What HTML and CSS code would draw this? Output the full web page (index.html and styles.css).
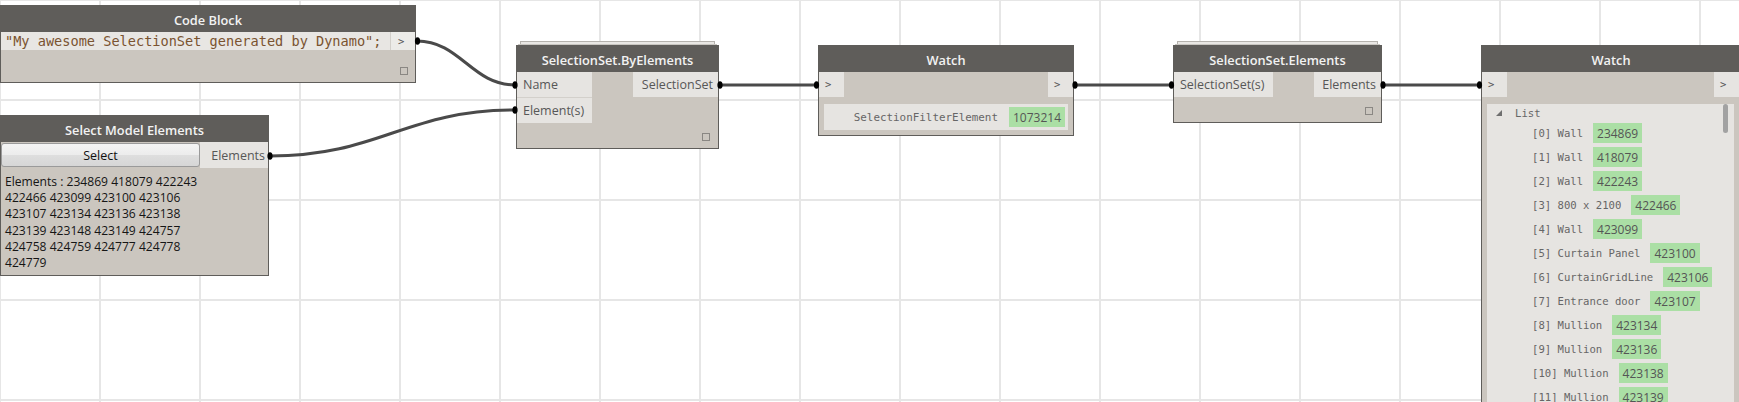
FILE: index.html
```html
<!DOCTYPE html>
<html>
<head>
<meta charset="utf-8">
<link rel="stylesheet" href="styles.css">
</head>
<body>
<div class="canvas">

  <div class="node n-code">
    <div class="head">Code Block</div>
    <div class="code-row">
      <div class="code">"My awesome SelectionSet generated by Dynamo";</div>
      <div class="arrow-port">&gt;</div>
    </div>
    <div class="foot"><span class="check"></span></div>
  </div>

  <div class="node n-select">
    <div class="head">Select Model Elements</div>
    <div class="sel-row">
      <div class="btn">Select</div>
      <div class="oport">Elements</div>
    </div>
    <div class="sel-text">Elements : 234869 418079 422243<br>422466 423099 423100 423106<br>423107 423134 423136 423138<br>423139 423148 423149 424757<br>424758 424759 424777 424778<br>424779</div>
  </div>

  <div class="node n-byel stack">
    <div class="head">SelectionSet.ByElements</div>
    <div class="ports">
      <div class="ins w-byel">
        <div class="iport">Name</div>
        <div class="iport second">Element(s)</div>
      </div>
      <div class="outs w-byel-out">
        <div class="oport">SelectionSet</div>
      </div>
    </div>
    <div class="foot f8"><span class="check"></span></div>
  </div>

  <div class="node n-watch1">
    <div class="head">Watch</div>
    <div class="ports">
      <div class="arrow-box">&gt;</div>
      <div class="arrow-box">&gt;</div>
    </div>
    <div class="watch-val">
      <span class="mono">SelectionFilterElement</span>
      <span class="green">1073214</span>
    </div>
  </div>

  <div class="node n-sselem stack">
    <div class="head">SelectionSet.Elements</div>
    <div class="ports">
      <div class="ins w-ss">
        <div class="iport">SelectionSet(s)</div>
      </div>
      <div class="outs w-ss-out">
        <div class="oport">Elements</div>
      </div>
    </div>
    <div class="foot f8"><span class="check"></span></div>
  </div>

  <div class="node n-watch2">
    <div class="head">Watch</div>
    <div class="ports">
      <div class="arrow-box">&gt;</div>
      <div class="arrow-box wide">&gt;</div>
    </div>
    <div class="list">
      <div class="list-head">
        <svg class="tri" width="6" height="6" viewBox="0 0 6 6"><polygon points="6,0 6,6 0,6" fill="#6f6f6f"/></svg>
        <span class="mono">List</span>
      </div>
      <div class="item"><span class="mono">[0] Wall</span><span class="green">234869</span></div>
      <div class="item"><span class="mono">[1] Wall</span><span class="green">418079</span></div>
      <div class="item"><span class="mono">[2] Wall</span><span class="green">422243</span></div>
      <div class="item"><span class="mono">[3] 800 x 2100</span><span class="green">422466</span></div>
      <div class="item"><span class="mono">[4] Wall</span><span class="green">423099</span></div>
      <div class="item"><span class="mono">[5] Curtain Panel</span><span class="green">423100</span></div>
      <div class="item"><span class="mono">[6] CurtainGridLine</span><span class="green">423106</span></div>
      <div class="item"><span class="mono">[7] Entrance door</span><span class="green">423107</span></div>
      <div class="item"><span class="mono">[8] Mullion</span><span class="green">423134</span></div>
      <div class="item"><span class="mono">[9] Mullion</span><span class="green">423136</span></div>
      <div class="item"><span class="mono">[10] Mullion</span><span class="green">423138</span></div>
      <div class="item"><span class="mono">[11] Mullion</span><span class="green">423139</span></div>
      <div class="scroll"></div>
    </div>
  </div>

  <svg class="wires" width="1739" height="402" viewBox="0 0 1739 402">
    <g fill="none" stroke="#4a4a4a" stroke-width="3">
      <path d="M417 41 C 460 41, 472 85, 515 85"/>
      <path d="M270 156 C 380 156, 405 110, 515 110"/>
      <path d="M720 85 L 816 85"/>
      <path d="M1075 85 L 1171 85"/>
      <path d="M1383 85 L 1479 85"/>
    </g>
    <g fill="#000">
      <ellipse cx="417.5" cy="41" rx="2.6" ry="3.8"/>
      <ellipse cx="270" cy="156" rx="2.6" ry="3.8"/>
      <ellipse cx="515" cy="85" rx="2.6" ry="3.8"/>
      <ellipse cx="515" cy="110" rx="2.6" ry="3.8"/>
      <ellipse cx="720" cy="85" rx="2.6" ry="3.8"/>
      <ellipse cx="816.5" cy="85" rx="2.6" ry="3.8"/>
      <ellipse cx="1075" cy="85" rx="2.6" ry="3.8"/>
      <ellipse cx="1171.5" cy="85" rx="2.6" ry="3.8"/>
      <ellipse cx="1383" cy="85" rx="2.6" ry="3.8"/>
      <ellipse cx="1479.5" cy="85" rx="2.6" ry="3.8"/>
    </g>
  </svg>
</div>
</body>
</html>
```

FILE: styles.css
```css
html, body {
  margin: 0;
  padding: 0;
}
body {
  width: 1739px;
  height: 402px;
  overflow: hidden;
  background-color: #ffffff;
  background-image:
    linear-gradient(to right, #e6e6e6 2px, transparent 2px),
    linear-gradient(to bottom, #e6e6e6 2px, transparent 2px);
  background-size: 100px 100px;
  background-position: -1px -1px;
  font-family: "Open Sans", "Noto Sans", sans-serif;
}
.canvas {
  position: relative;
  width: 1739px;
  height: 402px;
  overflow: hidden;
}

/* generic node */
.node {
  position: absolute;
  box-sizing: border-box;
  border: 1px solid #5f5d5a;
  background: #cbc6bf;
  display: flex;
  flex-direction: column;
}
.head {
  flex: none;
  height: 26px;
  background: #5f5d5a;
  color: #f2f2f2;
  font-weight: 600;
  font-size: 12.8px;
  display: flex;
  align-items: center;
  justify-content: center;
  padding-top: 1px;
  box-sizing: border-box;
}
.stack::before {
  content: "";
  position: absolute;
  left: 3px;
  right: 3px;
  top: -5px;
  height: 3px;
  border: 1px solid #b5b2ad;
  border-bottom: none;
  background: #e9e7e4;
}
.stack::after {
  content: "";
  position: absolute;
  left: 1px;
  right: 1px;
  top: -2px;
  height: 1px;
  background: #c9c6c1;
}
.foot {
  flex: 1;
  display: flex;
  justify-content: flex-end;
  align-items: flex-end;
  padding: 0 7px 7px 0;
}
.foot.f8 {
  padding-right: 8px;
}
.check {
  display: block;
  box-sizing: border-box;
  width: 8px;
  height: 8px;
  border: 1px solid #8a8783;
}

/* node placement on the free canvas */
.n-code   { left: 0;      top: 5px;  width: 416px; height: 78px; }
.n-select { left: 0;      top: 115px; width: 269px; height: 161px; }
.n-byel   { left: 516px;  top: 45px; width: 203px; height: 104px; }
.n-watch1 { left: 818px;  top: 45px; width: 256px; height: 91px; }
.n-sselem { left: 1173px; top: 45px; width: 209px; height: 78px; }
.n-watch2 { left: 1481px; top: 45px; width: 260px; height: 400px; }

/* code block */
.code-row {
  display: flex;
  height: 18px;
  flex: none;
}
.code {
  flex: 1;
  background: #e8e6e3;
  font-family: "DejaVu Sans Mono", monospace;
  font-size: 13.6px;
  line-height: 18px;
  color: #7a5330;
  padding-left: 4px;
  white-space: nowrap;
}
.arrow-port {
  width: 25px;
  background: #ecebe8;
  border-left: 1px solid #d2cfca;
  font-family: "DejaVu Sans Mono", monospace;
  font-size: 10.5px;
  line-height: 18px;
  color: #555;
  padding-left: 7px;
  box-sizing: border-box;
}

/* ports */
.ports {
  display: flex;
  justify-content: space-between;
  flex: none;
}
.ins, .outs {
  display: flex;
  flex-direction: column;
}
.w-byel { width: 75px; }
.w-byel-out { width: 85px; }
.w-ss { width: 99px; }
.w-ss-out { width: 67px; }
.iport, .oport {
  height: 25px;
  background: #e6e4e1;
  color: #575757;
  font-size: 12.5px;
  display: flex;
  align-items: center;
  box-sizing: border-box;
}
.iport {
  padding-left: 6px;
}
.iport.second {
  height: 26px;
  border-top: 1px solid #d3d0cb;
}
.oport {
  justify-content: flex-end;
  padding-right: 5px;
}

/* select model elements */
.sel-row {
  display: flex;
  height: 26px;
  flex: none;
}
.btn {
  box-sizing: border-box;
  width: 199px;
  height: 24px;
  margin-top: 1px;
  border: 1px solid #9a9a9a;
  border-radius: 3px;
  background: linear-gradient(to bottom, #f4f4f4 0%, #ececec 50%, #dedede 51%, #d6d6d6 100%);
  font-size: 12.5px;
  color: #111;
  display: flex;
  align-items: center;
  justify-content: center;
}
.sel-row .oport {
  flex: 1;
  height: 26px;
  padding-right: 3px;
}
.sel-text {
  padding: 6px 4px 0 4px;
  font-size: 12.1px;
  line-height: 16.2px;
  color: #151515;
}

/* watch nodes */
.arrow-box {
  width: 25px;
  height: 25px;
  background: #e6e4e1;
  font-family: "DejaVu Sans Mono", monospace;
  font-size: 10.5px;
  line-height: 25px;
  color: #555;
  padding-left: 6px;
  box-sizing: border-box;
}
.arrow-box.wide {
  width: 26px;
}
.watch-val {
  margin: 7px 5px 0 5px;
  height: 26px;
  background: #e6e4e1;
  display: flex;
  justify-content: flex-end;
  align-items: center;
  gap: 11px;
  padding-right: 3px;
}
.mono {
  font-family: "DejaVu Sans Mono", monospace;
  font-size: 10.6px;
  color: #666;
  white-space: pre;
}
.watch-val .mono {
  font-size: 10.9px;
}
.green {
  background: #abdfa5;
  height: 20px;
  padding: 0 4px;
  display: flex;
  align-items: center;
  font-size: 12px;
  color: #555;
}

.list {
  position: relative;
  margin: 7px 6px 0 5px;
  flex: 1;
  background: #e6e4e1;
  overflow: hidden;
}
.list-head {
  height: 17px;
  display: flex;
  align-items: center;
  padding-left: 9px;
}
.tri {
  margin-right: 13px;
  margin-top: 1px;
}
.item {
  height: 24px;
  display: flex;
  align-items: center;
  gap: 10px;
  padding-left: 45px;
}
.scroll {
  position: absolute;
  top: 0;
  right: 6px;
  width: 5px;
  height: 29px;
  border-radius: 3px;
  background: #a2a2a2;
}

.wires {
  position: absolute;
  left: 0;
  top: 0;
  pointer-events: none;
}
```
